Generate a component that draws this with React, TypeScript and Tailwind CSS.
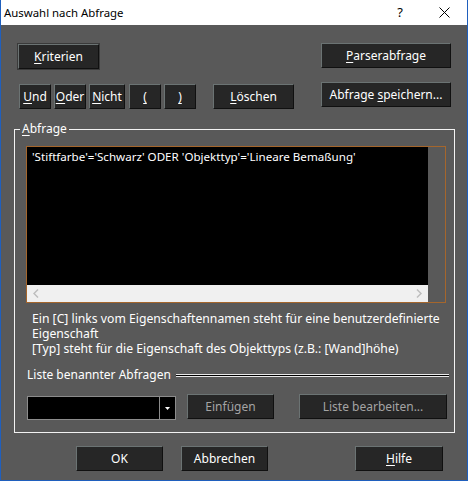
import type { ReactNode } from 'react';
import clsx from 'clsx';

// ---------------------------------------------------------------------------
// Small pieces
// ---------------------------------------------------------------------------

function Key({ children }: { children: ReactNode }) {
  return <span className="underline decoration-1 underline-offset-[2px]">{children}</span>;
}

function Btn({
  children,
  className,
  disabled,
}: {
  children: ReactNode;
  className?: string;
  disabled?: boolean;
}) {
  return (
    <button
      type="button"
      disabled={disabled}
      className={clsx(
        'flex h-[25px] shrink-0 items-center justify-center border border-t-[#6b7373] border-l-[#6b7373] border-r-[#101010] border-b-[#101010] bg-[#262626] text-[12px] leading-none',
        disabled ? 'text-[#a4a4a4]' : 'text-white',
        className,
      )}
    >
      {/* keep label runs together so spaces between words survive the flex box */}
      <span className="whitespace-pre">{children}</span>
    </button>
  );
}

function CloseIcon() {
  return (
    <svg width="11" height="11" viewBox="0 0 11 11" aria-hidden>
      <path d="M0.5 0.5L10.5 10.5M10.5 0.5L0.5 10.5" stroke="#000" strokeWidth="1" />
    </svg>
  );
}

function Chevron({ dir }: { dir: 'left' | 'right' }) {
  return (
    <svg width="6" height="9" viewBox="0 0 6 9" aria-hidden>
      <path
        d={dir === 'left' ? 'M5 0.5L1 4.5L5 8.5' : 'M1 0.5L5 4.5L1 8.5'}
        stroke="#bdbdbd"
        strokeWidth="1.5"
        fill="none"
      />
    </svg>
  );
}

// ---------------------------------------------------------------------------
// Dialog
// ---------------------------------------------------------------------------

export default function App() {
  return (
    <div className="flex h-[481px] w-[468px] flex-col border-x border-b border-[#1f5fbd] bg-[#595959] font-['Noto_Sans',sans-serif] text-[12px] text-white">
      {/* Title bar */}
      <div className="flex h-[25px] shrink-0 items-center bg-white pl-[3px] text-black">
        <span className="text-[11.4px] leading-none">Auswahl nach Abfrage</span>
        <span className="ml-auto mr-[36px] text-[13px] leading-none">?</span>
        <span className="mr-[17px] flex items-center">
          <CloseIcon />
        </span>
      </div>

      {/* Top button rows */}
      <div className="mt-[18px] flex items-start pl-[16px]">
        <div className="border border-[#3a3a3a]">
          <Btn className="h-[23px] w-[81px]">
            <Key>K</Key>riterien
          </Btn>
        </div>
        <Btn className="ml-[221px] w-[130px]">
          <Key>P</Key>arserabfrage
        </Btn>
      </div>

      <div className="mt-[12px] flex items-start pl-[18px]">
        <div className="mt-[2px] flex items-start">
          <Btn className="w-[32px]">
            <Key>U</Key>nd
          </Btn>
          <Btn className="ml-[3px] w-[32px]">
            <Key>O</Key>der
          </Btn>
          <Btn className="ml-[3px] w-[36px]">
            <Key>N</Key>icht
          </Btn>
          <Btn className="ml-[4px] w-[32px]">
            <Key>(</Key>
          </Btn>
          <Btn className="ml-[3px] w-[32px]">
            <Key>)</Key>
          </Btn>
          <Btn className="ml-[17px] w-[81px]">
            <Key>L</Key>öschen
          </Btn>
        </div>
        <Btn className="ml-[27px] w-[130px]">
          Abfrage <Key>s</Key>peichern...
        </Btn>
      </div>

      {/* Query group */}
      <fieldset className="ml-[13px] mt-[12px] h-[312px] w-[441px] border border-[#f2f2f2]">
        <legend className="ml-[5px] px-[2px] text-[12px] leading-[16px]">
          <Key>A</Key>bfrage
        </legend>

        <div className="ml-[11px] mt-[9px] flex h-[157px] w-[420px] border border-[#a5662c]">
          <div className="flex w-[401px] flex-col">
            <div className="flex-1 bg-black px-[5px] pt-[2px] text-[11.6px] leading-[16px]">
              'Stiftfarbe'='Schwarz' ODER 'Objekttyp'='Lineare Bemaßung'
            </div>
            <div className="flex h-[17px] items-center justify-between bg-[#f0f0f0] px-[6px]">
              <Chevron dir="left" />
              <Chevron dir="right" />
            </div>
          </div>
          <div className="flex-1 bg-[#595959]" />
        </div>

        <div className="ml-[17px] mt-[8px] text-[12.2px] leading-[15px]">
          <p>Ein [C] links vom Eigenschaftennamen steht für eine benutzerdefinierte</p>
          <p>Eigenschaft</p>
          <p>[Typ] steht für die Eigenschaft des Objekttyps (z.B.: [Wand]höhe)</p>
        </div>

        <div className="ml-[12px] mr-[5px] mt-[11px] flex items-center leading-[16px]">
          <span>Liste benannter Abfragen</span>
          <div className="ml-[5px] h-[3px] flex-1 border-y border-[#e8e8e8] bg-black" />
        </div>

        <div className="ml-[12px] mt-[11px] flex items-start">
          <div className="mt-[2px] flex h-[24px] w-[149px]">
            <div className="flex-1 border border-[#8c8c8c] bg-black" />
            <div className="flex w-[16px] items-center justify-center border border-l-0 border-[#8c8c8c] bg-black">
              <svg width="5" height="3" viewBox="0 0 5 3" aria-hidden>
                <path d="M0 0H5L2.5 3Z" fill="#fff" />
              </svg>
            </div>
          </div>
          <Btn disabled className="ml-[11px] w-[87px]">
            Einfügen
          </Btn>
          <Btn disabled className="ml-[25px] w-[148px]">
            Liste bearbeiten...
          </Btn>
        </div>
      </fieldset>

      {/* Dialog buttons */}
      <div className="mt-[13px] flex items-start pl-[75px]">
        <Btn className="w-[87px]">OK</Btn>
        <Btn className="ml-[18px] w-[87px]">Abbrechen</Btn>
        <Btn className="ml-[87px] w-[88px]">
          <Key>H</Key>ilfe
        </Btn>
      </div>
    </div>
  );
}
